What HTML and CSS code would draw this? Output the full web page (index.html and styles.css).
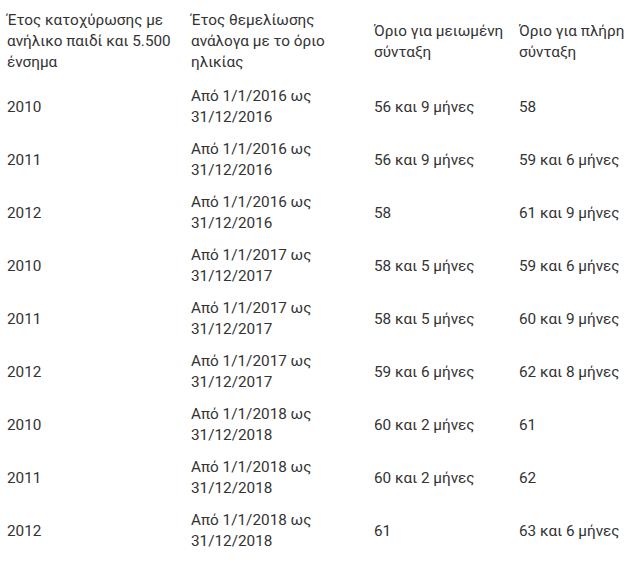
FILE: index.html
```html
<!DOCTYPE html>
<html lang="el">
<head>
<meta charset="utf-8">
<title>Όρια συνταξιοδότησης</title>
<link rel="stylesheet" href="styles.css">
</head>
<body>
<table class="limits">
  <colgroup>
    <col class="c1"><col class="c2"><col class="c3"><col class="c4">
  </colgroup>
  <thead>
    <tr>
      <th>Έτος κατοχύρωσης με ανήλικο παιδί και 5.500 ένσημα</th>
      <th>Έτος θεμελίωσης ανάλογα με το όριο ηλικίας</th>
      <th>Όριο για μειωμένη σύνταξη</th>
      <th>Όριο για πλήρη σύνταξη</th>
    </tr>
  </thead>
  <tbody>
    <tr><td>2010</td><td>Από 1/1/2016 ως 31/12/2016</td><td>56 και 9 μήνες</td><td>58</td></tr>
    <tr><td>2011</td><td>Από 1/1/2016 ως 31/12/2016</td><td>56 και 9 μήνες</td><td>59 και 6 μήνες</td></tr>
    <tr><td>2012</td><td>Από 1/1/2016 ως 31/12/2016</td><td>58</td><td>61 και 9 μήνες</td></tr>
    <tr><td>2010</td><td>Από 1/1/2017 ως 31/12/2017</td><td>58 και 5 μήνες</td><td>59 και 6 μήνες</td></tr>
    <tr><td>2011</td><td>Από 1/1/2017 ως 31/12/2017</td><td>58 και 5 μήνες</td><td>60 και 9 μήνες</td></tr>
    <tr><td>2012</td><td>Από 1/1/2017 ως 31/12/2017</td><td>59 και 6 μήνες</td><td>62 και 8 μήνες</td></tr>
    <tr><td>2010</td><td>Από 1/1/2018 ως 31/12/2018</td><td>60 και 2 μήνες</td><td>61</td></tr>
    <tr><td>2011</td><td>Από 1/1/2018 ως 31/12/2018</td><td>60 και 2 μήνες</td><td>62</td></tr>
    <tr><td>2012</td><td>Από 1/1/2018 ως 31/12/2018</td><td>61</td><td>63 και 6 μήνες</td></tr>
  </tbody>
</table>
</body>
</html>
```
FILE: styles.css
```css
html, body {
  margin: 0;
  padding: 0;
  background: #ffffff;
}

body {
  font-family: Roboto, "Noto Sans", "DejaVu Sans", sans-serif;
  font-size: 15.3px;
  line-height: 21px;
  color: #333333;
  padding: 5px 0 0 7px;
}

.limits {
  border-collapse: collapse;
  table-layout: fixed;
  width: 630px;
}

.c1 { width: 184px; }
.c2 { width: 183px; }
.c3 { width: 145px; }
.c4 { width: 118px; }

.limits th,
.limits td {
  padding: 5px 0 6px 0;
  vertical-align: middle;
  text-align: left;
  font-weight: 400;
}

.limits th {
  padding-top: 5px;
  padding-bottom: 7px;
}

.limits tbody tr:first-child td {
  padding-top: 6px;
}

.limits th:nth-child(1),
.limits td:nth-child(1) { padding-right: 10px; }

.limits th:nth-child(2),
.limits td:nth-child(2) { padding-right: 26px; }

.limits th:nth-child(3),
.limits td:nth-child(3) { padding-right: 6px; }

.limits th:nth-child(4),
.limits td:nth-child(4) { padding-right: 4px; }
```
